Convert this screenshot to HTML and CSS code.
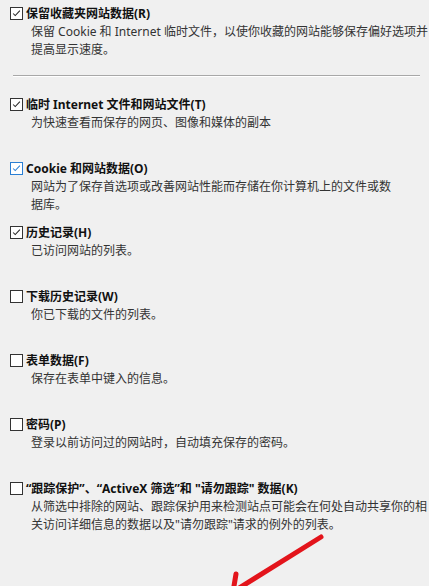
FILE: index.html
```html
<!DOCTYPE html>
<html lang="zh-CN">
<head>
<meta charset="utf-8">
<link rel="stylesheet" href="styles.css">
</head>
<body>
<div class="page">
  <div class="item">
    <div class="title"><span class="cb"><svg viewBox="0 0 13 13"><polyline points="2.5,6.5 5,9 10.5,3.2"/></svg></span>保留收藏夹网站数据(R)</div>
    <div class="desc">保留 Cookie 和 Internet 临时文件，以使你收藏的网站能够保存偏好选项并<br>提高显示速度。</div>
  </div>
  <div class="sep"></div>
  <div class="item">
    <div class="title"><span class="cb"><svg viewBox="0 0 13 13"><polyline points="2.5,6.5 5,9 10.5,3.2"/></svg></span>临时 Internet 文件和网站文件(T)</div>
    <div class="desc">为快速查看而保存的网页、图像和媒体的副本</div>
  </div>
  <div class="item">
    <div class="title"><span class="cb focus"><svg viewBox="0 0 13 13"><polyline points="2.5,6.5 5,9 10.5,3.2"/></svg></span>Cookie 和网站数据(O)</div>
    <div class="desc">网站为了保存首选项或改善网站性能而存储在你计算机上的文件或数<br>据库。</div>
  </div>
  <div class="item">
    <div class="title"><span class="cb"><svg viewBox="0 0 13 13"><polyline points="2.5,6.5 5,9 10.5,3.2"/></svg></span>历史记录(H)</div>
    <div class="desc">已访问网站的列表。</div>
  </div>
  <div class="item">
    <div class="title"><span class="cb empty"></span>下载历史记录(W)</div>
    <div class="desc">你已下载的文件的列表。</div>
  </div>
  <div class="item">
    <div class="title"><span class="cb empty"></span>表单数据(F)</div>
    <div class="desc">保存在表单中键入的信息。</div>
  </div>
  <div class="item">
    <div class="title"><span class="cb empty"></span>密码(P)</div>
    <div class="desc">登录以前访问过的网站时，自动填充保存的密码。</div>
  </div>
  <div class="item">
    <div class="title"><span class="cb empty"></span>“跟踪保护”、“ActiveX 筛选”和 "请勿跟踪" 数据(K)</div>
    <div class="desc">从筛选中排除的网站、跟踪保护用来检测站点可能会在何处自动共享你的相<br>关访问详细信息的数据以及"请勿跟踪"请求的例外的列表。</div>
  </div>
</div>
<svg class="arrow" viewBox="0 0 429 586" width="429" height="586">
  <line x1="321" y1="537" x2="236" y2="590"/>
  <polyline points="236,574 233,592 252,590"/>
</svg>
</body>
</html>
```

FILE: styles.css
```css
html, body {
  margin: 0;
  padding: 0;
  background: #f0f0f0;
  overflow: hidden;
  width: 429px;
  height: 586px;
}
body {
  position: relative;
  font-family: "Noto Sans", "Noto Sans CJK SC", sans-serif;
  font-size: 12px;
  color: #1a1a1a;
}
.page {
  padding-top: 3px;
}
.item {
  height: 64px;
  white-space: nowrap;
}
.title {
  display: flex;
  align-items: center;
  height: 20px;
  padding-left: 10px;
  font-weight: bold;
  color: #111;
}
.cb {
  box-sizing: border-box;
  width: 13px;
  height: 13px;
  border: 1px solid #333;
  background: #fff;
  margin-right: 3px;
  flex: none;
  display: flex;
}
.cb svg {
  width: 11px;
  height: 11px;
  margin: 0;
}
.cb svg polyline {
  fill: none;
  stroke: #222;
  stroke-width: 1.2;
}
.cb.focus {
  border-color: #2a7fd4;
}
.cb.focus svg polyline {
  stroke: #2a7fd4;
}
.desc {
  padding-left: 31px;
  line-height: 18px;
  color: #333;
}
.sep {
  margin: 8px 9px 17px 13px;
  height: 1px;
  background: #a8a8a8;
  border-bottom: 1px solid #fff;
}
.arrow {
  position: absolute;
  left: 0;
  top: 0;
  pointer-events: none;
}
.arrow line, .arrow polyline {
  stroke: #e3141b;
  stroke-width: 5;
  fill: none;
  stroke-linecap: round;
}
```
